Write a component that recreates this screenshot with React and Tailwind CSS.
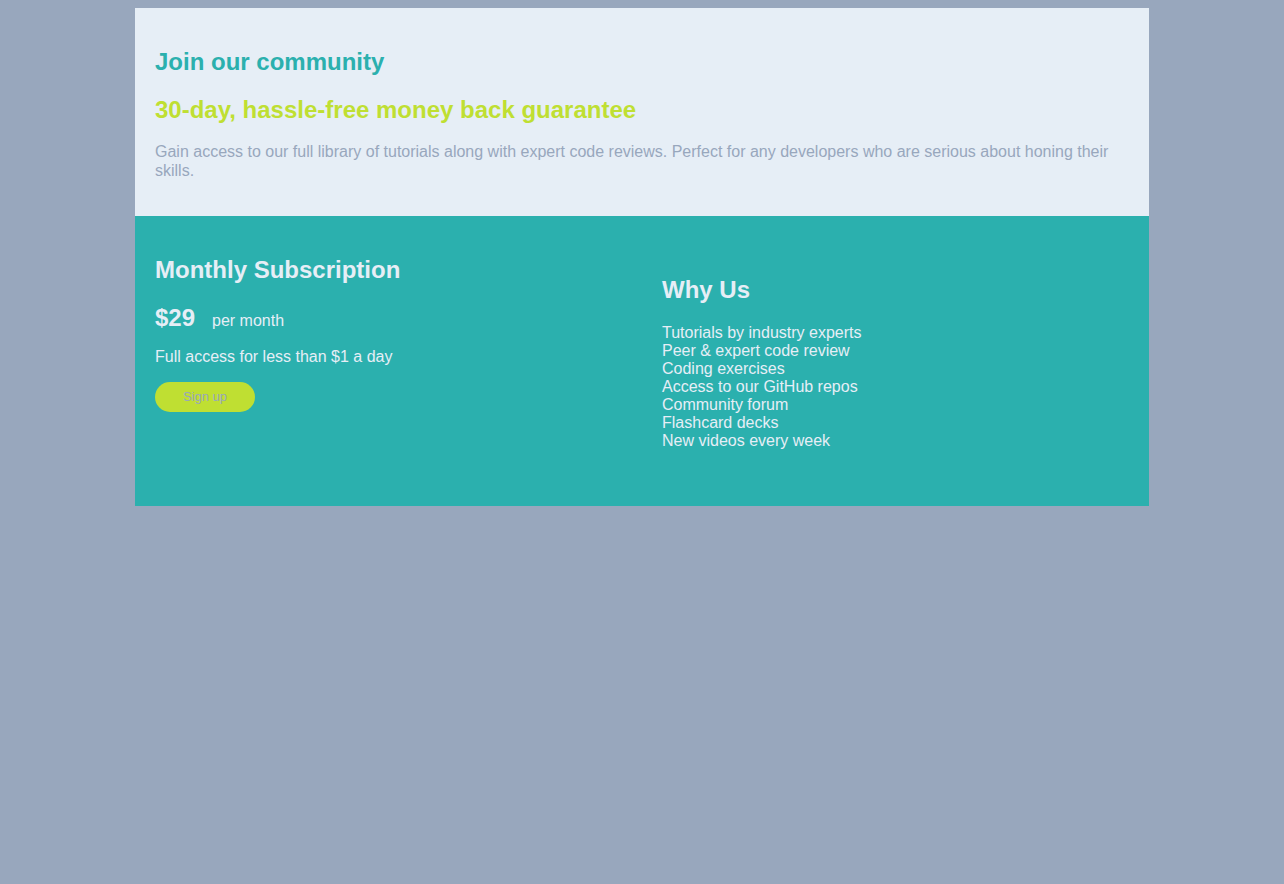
export default function App() {
  const reasons = [
    "Tutorials by industry experts",
    "Peer & expert code review",
    "Coding exercises",
    "Access to our GitHub repos",
    "Community forum",
    "Flashcard decks",
    "New videos every week",
  ];

  return (
    <div className="min-h-screen bg-[#98a7bd] pt-2 font-['Liberation_Sans',Arial,sans-serif]">
      <div className="w-[1014px] mx-auto">
        <section className="bg-[#e6eef6] px-5 pt-10 pb-9">
          <h2 className="text-[24px] leading-[27.6px] font-bold text-[#2bb0ae]">Join our community</h2>
          <h2 className="mt-5 text-[24px] leading-[27.6px] font-bold text-[#bfdf32]">
            30-day, hassle-free money back guarantee
          </h2>
          <p className="mt-5 text-[16px] leading-[18.4px] text-[#98a7bd]">
            Gain access to our full library of tutorials along with expert code reviews. Perfect for any developers who are serious about honing their skills.
          </p>
        </section>

        <section className="bg-[#2bb0ae] h-[290px] flex text-[#e6eef6]">
          <div className="w-1/2 px-5 pt-10">
            <h2 className="text-[24px] leading-[27.6px] font-bold">Monthly Subscription</h2>
            <p className="mt-5 flex items-baseline h-[27.6px] leading-[27.6px]">
              <span className="text-[24px] font-bold">$29</span>
              <span className="ml-[17px] text-[16px]">per month</span>
            </p>
            <p className="mt-[17px] text-[16px] leading-[18.4px]">Full access for less than $1 a day</p>
            <button
              type="button"
              className="mt-[15px] w-[100px] h-[30px] rounded-full bg-[#bfdf32] text-[#98a7bd] text-[13px]"
            >
              Sign up
            </button>
          </div>
          <div className="w-1/2 px-5 pt-[60px]">
            <h2 className="text-[24px] leading-[27.6px] font-bold">Why Us</h2>
            <ul className="mt-5 text-[16px] leading-[18px]">
              {reasons.map((r) => (
                <li key={r}>{r}</li>
              ))}
            </ul>
          </div>
        </section>
      </div>
    </div>
  );
}
